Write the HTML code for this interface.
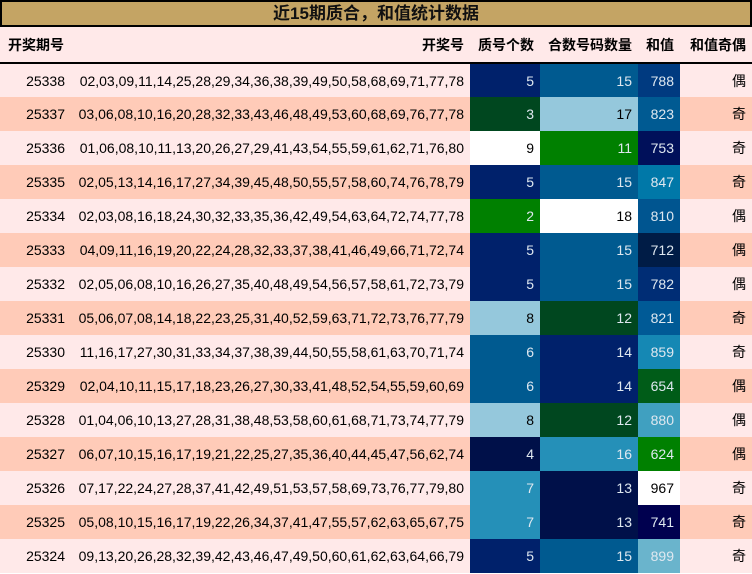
<!DOCTYPE html>
<html><head><meta charset="utf-8"><style>
*{margin:0;padding:0;box-sizing:border-box}
body{width:752px;height:574px;background:#fff;font-family:"Liberation Sans","Noto Sans CJK SC",sans-serif;overflow:hidden}
.title{height:27px;background:#c4a464;border:2px solid #000;text-align:center;font-weight:bold;font-size:17px;line-height:23px;color:#111}
table{border-collapse:collapse;table-layout:fixed;width:752px}
td,th{height:34px;padding:0 6px;text-align:right;font-size:14px;white-space:nowrap;overflow:hidden}
th{font-weight:bold;background:#ffe9e9;height:36px;border-bottom:2px solid #000;font-size:14px}
tr.a td{background:#ffe9e9}
tr.b td{background:#ffcbb8}
td.l{color:#dfe8f0}
</style></head><body>
<div class="title">近15期质合，和值统计数据</div>
<table>
<colgroup><col style="width:71px"><col style="width:399px"><col style="width:70px"><col style="width:98px"><col style="width:42px"><col style="width:72px"></colgroup>
<tr><th style="text-align:left;padding-left:8px">开奖期号</th><th>开奖号</th><th>质号个数</th><th>合数号码数量</th><th>和值</th><th>和值奇偶</th></tr>
<tr class="a"><td>25338</td><td>02,03,09,11,14,25,28,29,34,36,38,39,49,50,58,68,69,71,77,78</td><td class="l" style="background:#00216b">5</td><td class="l" style="background:#005a90">15</td><td class="l" style="background:#003a80">788</td><td>偶</td></tr>
<tr class="b"><td>25337</td><td>03,06,08,10,16,20,28,32,33,43,46,48,49,53,60,68,69,76,77,78</td><td class="l" style="background:#00471f">3</td><td style="background:#95c8dc">17</td><td class="l" style="background:#005a92">823</td><td>奇</td></tr>
<tr class="a"><td>25336</td><td>01,06,08,10,11,13,20,26,27,29,41,43,54,55,59,61,62,71,76,80</td><td style="background:#fff">9</td><td class="l" style="background:#008000">11</td><td class="l" style="background:#00105a">753</td><td>奇</td></tr>
<tr class="b"><td>25335</td><td>02,05,13,14,16,17,27,34,39,45,48,50,55,57,58,60,74,76,78,79</td><td class="l" style="background:#00216b">5</td><td class="l" style="background:#005a90">15</td><td class="l" style="background:#0078a8">847</td><td>奇</td></tr>
<tr class="a"><td>25334</td><td>02,03,08,16,18,24,30,32,33,35,36,42,49,54,63,64,72,74,77,78</td><td class="l" style="background:#008000">2</td><td style="background:#fff">18</td><td class="l" style="background:#005590">810</td><td>偶</td></tr>
<tr class="b"><td>25333</td><td>04,09,11,16,19,20,22,24,28,32,33,37,38,41,46,49,66,71,72,74</td><td class="l" style="background:#00216b">5</td><td class="l" style="background:#005a90">15</td><td class="l" style="background:#001c46">712</td><td>偶</td></tr>
<tr class="a"><td>25332</td><td>02,05,06,08,10,16,26,27,35,40,48,49,54,56,57,58,61,72,73,79</td><td class="l" style="background:#00216b">5</td><td class="l" style="background:#005a90">15</td><td class="l" style="background:#002d75">782</td><td>偶</td></tr>
<tr class="b"><td>25331</td><td>05,06,07,08,14,18,22,23,25,31,40,52,59,63,71,72,73,76,77,79</td><td style="background:#95c8dc">8</td><td class="l" style="background:#00471f">12</td><td class="l" style="background:#005a96">821</td><td>奇</td></tr>
<tr class="a"><td>25330</td><td>11,16,17,27,30,31,33,34,37,38,39,44,50,55,58,61,63,70,71,74</td><td class="l" style="background:#005a90">6</td><td class="l" style="background:#00216b">14</td><td class="l" style="background:#1588b4">859</td><td>奇</td></tr>
<tr class="b"><td>25329</td><td>02,04,10,11,15,17,18,23,26,27,30,33,41,48,52,54,55,59,60,69</td><td class="l" style="background:#005a90">6</td><td class="l" style="background:#00216b">14</td><td class="l" style="background:#005c18">654</td><td>偶</td></tr>
<tr class="a"><td>25328</td><td>01,04,06,10,13,27,28,31,38,48,53,58,60,61,68,71,73,74,77,79</td><td style="background:#95c8dc">8</td><td class="l" style="background:#00471f">12</td><td class="l" style="background:#40a0c0">880</td><td>偶</td></tr>
<tr class="b"><td>25327</td><td>06,07,10,15,16,17,19,21,22,25,27,35,36,40,44,45,47,56,62,74</td><td class="l" style="background:#001049">4</td><td class="l" style="background:#2590b8">16</td><td class="l" style="background:#008000">624</td><td>偶</td></tr>
<tr class="a"><td>25326</td><td>07,17,22,24,27,28,37,41,42,49,51,53,57,58,69,73,76,77,79,80</td><td class="l" style="background:#2590b8">7</td><td class="l" style="background:#001049">13</td><td style="background:#fff">967</td><td>奇</td></tr>
<tr class="b"><td>25325</td><td>05,08,10,15,16,17,19,22,26,34,37,41,47,55,57,62,63,65,67,75</td><td class="l" style="background:#2590b8">7</td><td class="l" style="background:#001049">13</td><td class="l" style="background:#00004f">741</td><td>奇</td></tr>
<tr class="a"><td>25324</td><td>09,13,20,26,28,32,39,42,43,46,47,49,50,60,61,62,63,64,66,79</td><td class="l" style="background:#00216b">5</td><td class="l" style="background:#005a90">15</td><td class="l" style="background:#6ab4cc">899</td><td>奇</td></tr>
</table>
</body></html>
